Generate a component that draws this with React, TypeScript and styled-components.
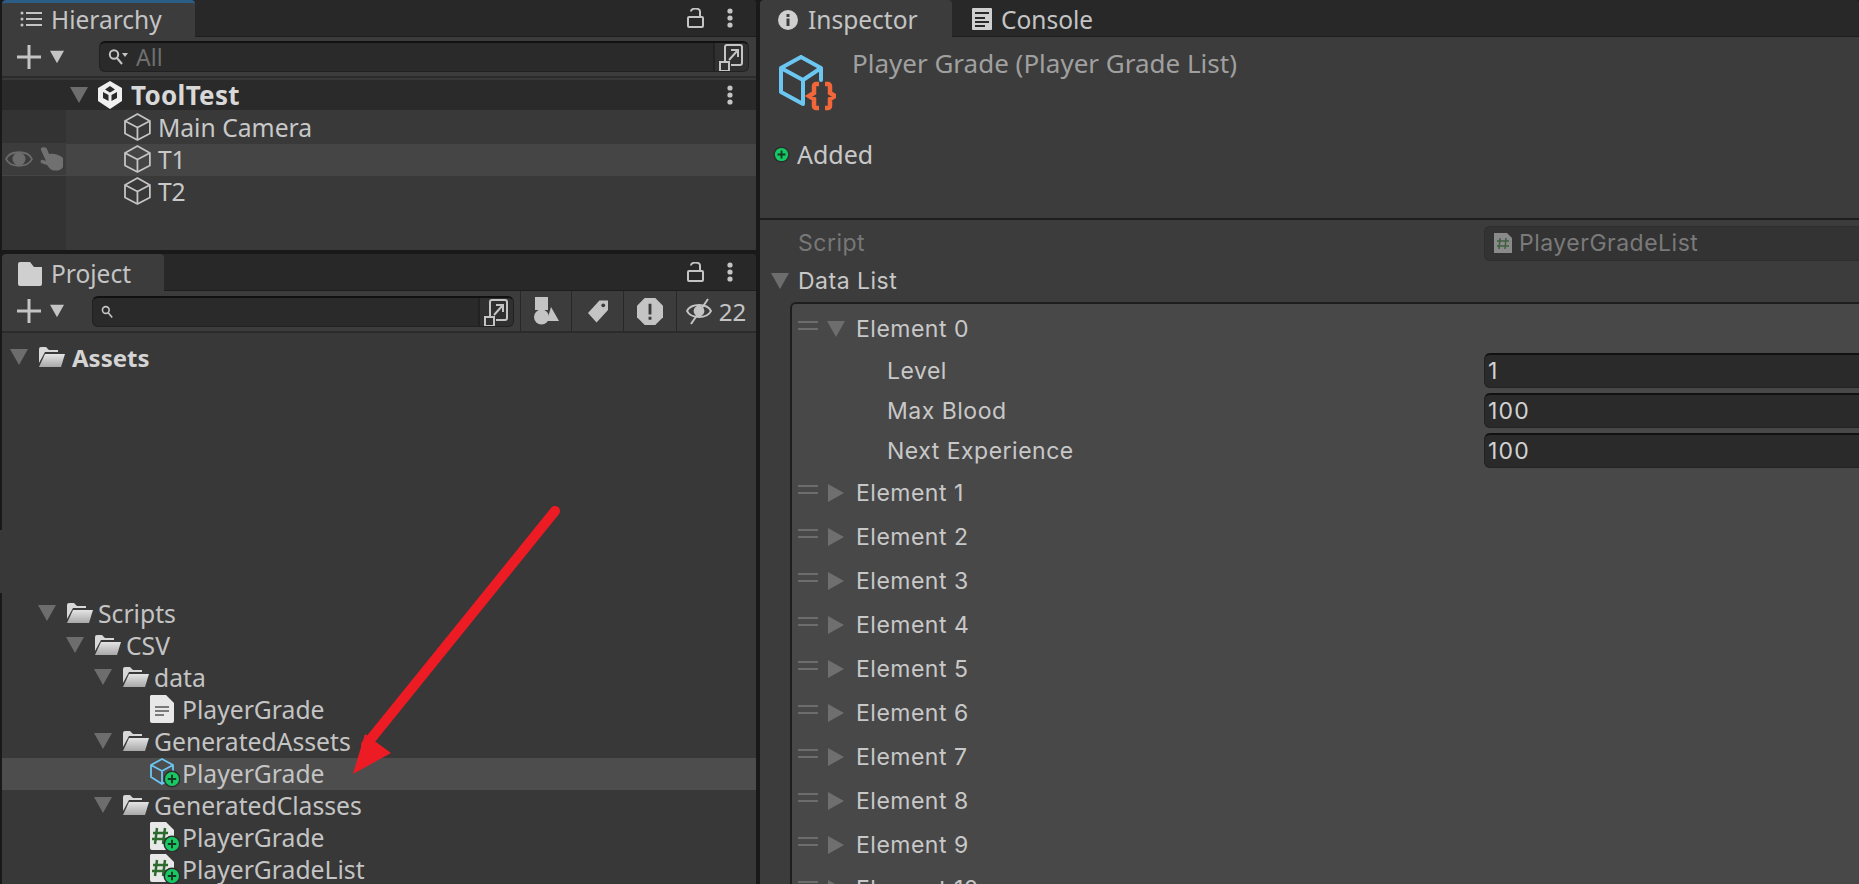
import React from 'react'
import styled, { createGlobalStyle } from 'styled-components'

const GlobalStyle = createGlobalStyle`
  html, body {
    margin: 0;
    background: #191919;
    overflow: hidden;
  }
  * { box-sizing: border-box; }
`

const Page = styled.div`
  position: relative;
  width: 1859px;
  height: 884px;
  overflow: hidden;
  display: grid;
  grid-template-columns: 754px 1fr;
  column-gap: 4px;
  padding-left: 2px;
  background: #191919;
  font-family: 'Noto Sans', sans-serif;
  color: #c8c8c8;
`

const Column = styled.div`
  display: flex;
  flex-direction: column;
  gap: 4px;
  min-height: 0;
`

const Panel = styled.section<{ $height?: number }>`
  display: flex;
  flex-direction: column;
  background: #383838;
  overflow: hidden;
  border-radius: 4px 4px 0 0;
  ${({ $height }) => ($height ? `height: ${$height}px; flex: none;` : 'flex: 1;')}
`

const TabBar = styled.div`
  height: 37px;
  flex: none;
  display: flex;
  align-items: stretch;
  background: #282828;
  border-bottom: 1px solid #1e1e1e;
`

const Tab = styled.div<{ $width: number; $active?: boolean; $accent?: boolean; $pad: number; $gap?: number }>`
  width: ${({ $width }) => $width}px;
  display: flex;
  align-items: center;
  gap: ${({ $gap }) => $gap ?? 9}px;
  padding-left: ${({ $pad }) => $pad}px;
  padding-top: ${({ $accent }) => ($accent ? 0 : 2)}px;
  padding-bottom: ${({ $accent }) => ($accent ? 2 : 0)}px;
  font-size: 24.5px;
  color: #c4c4c4;
  background: ${({ $active }) => ($active ? '#3c3c3c' : 'transparent')};
  border-top: ${({ $accent }) => ($accent ? '3px solid #2c5d87' : 'none')};
  border-radius: 4px 4px 0 0;
  margin-bottom: ${({ $active }) => ($active ? '-1px' : '0')};
  position: relative;
`

const TabActions = styled.div`
  margin-left: auto;
  display: flex;
  align-items: center;
  gap: 23px;
  padding-right: 23px;
`

const Toolbar = styled.div<{ $height: number }>`
  height: ${({ $height }) => $height}px;
  flex: none;
  display: flex;
  align-items: center;
  padding-left: 15px;
  background: #3c3c3c;
  border-bottom: 2px solid #2b2b2b;
`

const AddButton = styled.div`
  display: flex;
  align-items: center;
  gap: 9px;
`

const SearchField = styled.div<{ $left: number; $width: number }>`
  margin-left: ${({ $left }) => $left}px;
  width: ${({ $width }) => $width}px;
  height: 31px;
  flex: none;
  display: flex;
  align-items: center;
  background: #2a2a2a;
  border: 1px solid #212121;
  border-top: 2px solid #111;
  border-radius: 6px;
  padding-left: 8px;
  overflow: hidden;
`

const SearchHint = styled.span`
  margin-left: 8px;
  font-size: 23px;
  color: #6f6f6f;
`

const PopoutSlot = styled.div`
  margin-left: auto;
  width: 35px;
  height: 100%;
  flex: none;
  display: flex;
  align-items: center;
  justify-content: center;
  background: #303030;
  border-left: 2px solid #222;
`

const FilterGroup = styled.div`
  margin-left: 6px;
  height: 100%;
  display: flex;
`

const FilterButton = styled.div<{ $width: number }>`
  width: ${({ $width }) => $width}px;
  display: flex;
  align-items: center;
  justify-content: center;
  gap: 7px;
  border-left: 1px solid #282828;
  font-size: 24px;
  color: #c4c4c4;
`

const SceneRow = styled.div`
  height: 30px;
  margin-top: 2px;
  flex: none;
  display: flex;
  align-items: center;
  padding-left: 68px;
  background: #2a2a2a;
  font-size: 26px;
  font-weight: 700;
  letter-spacing: 0.3px;
  color: #d8d8d8;
`

const SceneArrow = styled.div`
  width: 28px;
  flex: none;
  display: flex;
`

const SceneName = styled.span`
  margin-left: 9px;
`

const SceneMenu = styled.div`
  margin-left: auto;
  padding-right: 23px;
  display: flex;
`

const HierarchyBody = styled.div`
  position: relative;
  flex: 1;
  background: linear-gradient(to right, #333 64px, #393939 64px);
`

const ObjectRow = styled.div<{ $height: number; $hot?: boolean; $lift?: boolean }>`
  height: ${({ $height }) => $height}px;
  display: flex;
  align-items: center;
  padding-bottom: ${({ $lift }) => ($lift ? 2 : 0)}px;
  background: ${({ $hot }) => ($hot ? '#454545' : 'transparent')};
  font-size: 24.7px;
  color: #c8c8c8;
`

const RowGutter = styled.div<{ $hot?: boolean }>`
  width: 64px;
  height: calc(100% + ${({ $hot }) => ($hot ? 2 : 0)}px);
  flex: none;
  display: flex;
  align-items: center;
  gap: 7px;
  padding-left: 3px;
  background: ${({ $hot }) => ($hot ? '#3c3c3c' : 'transparent')};
`

const ObjectIcon = styled.div<{ $left: number }>`
  margin-left: ${({ $left }) => $left}px;
  margin-right: 7px;
  display: flex;
`

const TreeBody = styled.div`
  flex: 1;
  padding-top: 9px;
`

const TreeGap = styled.div`
  height: 224px;
`

const TreeRow = styled.div<{ $depth: number; $selected?: boolean; $bold?: boolean }>`
  height: 32px;
  display: flex;
  align-items: center;
  padding-left: ${({ $depth }) => 8 + $depth * 28}px;
  padding-bottom: 2px;
  background: ${({ $selected }) => ($selected ? '#4d4d4d' : 'transparent')};
  font-size: ${({ $bold }) => ($bold ? 24 : 24.7)}px;
  font-weight: ${({ $bold }) => ($bold ? 700 : 400)};
  color: ${({ $bold }) => ($bold ? '#d4d4d4' : '#c4c4c4')};
`

const TreeArrow = styled.div`
  width: 28px;
  flex: none;
  display: flex;
`

const TreeIcon = styled.div<{ $width: number }>`
  width: ${({ $width }) => $width}px;
  flex: none;
  display: flex;
`

const InspectorPanel = styled(Panel)`
  background: #3c3c3c;
`

const InspectorHeader = styled.header`
  height: 183px;
  flex: none;
  display: flex;
  flex-direction: column;
  border-bottom: 2px solid #1e1e1e;
`

const TitleRow = styled.div`
  display: flex;
  align-items: flex-start;
  padding: 18px 0 0 18px;
`

const AssetTitle = styled.div`
  margin-left: 16px;
  margin-top: -10px;
  font-size: 26px;
  color: #a0a0a0;
`

const AddedRow = styled.div`
  margin-top: 26px;
  padding-left: 13px;
  display: flex;
  align-items: center;
  gap: 7px;
  font-size: 25px;
  color: #c8c8c8;
`

const ScriptRow = styled.div`
  margin-top: 4px;
  height: 38px;
  flex: none;
  display: flex;
  align-items: center;
  padding-left: 38px;
  font-family: Inter, sans-serif;
  font-size: 23px;
  letter-spacing: 0.5px;
  color: #777;
`

const ScriptLabel = styled.span`
  width: 686px;
  flex: none;
`

const ScriptField = styled.div`
  flex: 1;
  height: 35px;
  display: flex;
  align-items: center;
  gap: 7px;
  padding-left: 9px;
  background: #333;
  border: 1px solid #2e2e2e;
  border-right: none;
  border-radius: 6px 0 0 6px;
  color: #7a7a7a;
`

const DataListRow = styled.div`
  height: 38px;
  flex: none;
  display: flex;
  align-items: center;
  padding-left: 11px;
  gap: 9px;
  font-family: Inter, sans-serif;
  font-size: 23px;
  letter-spacing: 0.5px;
  color: #c8c8c8;
`

const ListBox = styled.div`
  margin: 2px 0 0 30px;
  flex: 1;
  padding-top: 3px;
  background: #484848;
  border-top: 2px solid #1e1e1e;
  border-left: 2px solid #1e1e1e;
  border-radius: 6px 0 0 0;
  font-family: Inter, sans-serif;
  font-size: 23px;
  letter-spacing: 0.5px;
  color: #c8c8c8;
`

const ElementRow = styled.div`
  height: 44px;
  display: flex;
  align-items: center;
  padding-left: 6px;
`

const DragHandle = styled.div`
  width: 20px;
  height: 9px;
  margin-top: -8px;
  margin-right: 9px;
  flex: none;
  border-top: 2px solid #6c6c6c;
  border-bottom: 2px solid #6c6c6c;
`

const ElementArrow = styled.div`
  width: 29px;
  flex: none;
  display: flex;
`

const FieldRow = styled.div`
  height: 40px;
  display: flex;
  align-items: center;
  padding-left: 95px;
`

const FieldLabel = styled.span`
  width: 597px;
  flex: none;
`

const FieldInput = styled.div`
  flex: 1;
  height: 35px;
  margin-bottom: 1px;
  display: flex;
  align-items: center;
  padding-left: 3px;
  background: #2a2a2a;
  border: 1px solid #222;
  border-top: 2px solid #111;
  border-right: none;
  border-radius: 6px 0 0 6px;
  letter-spacing: 1.2px;
  color: #d2d2d2;
`

const EdgePatch = styled.div`
  position: absolute;
  left: 0;
  top: 530px;
  width: 2px;
  height: 63px;
  background: #383838;
`

const ArrowOverlay = styled.svg`
  position: absolute;
  left: 0;
  top: 0;
  pointer-events: none;
`

const Down = ({ size = 18, color = '#6d6d6d' }: { size?: number; color?: string }) => (
  <svg width={size} height={size} viewBox="0 0 18 18">
    <path d="M0 1h18L9 17z" fill={color} />
  </svg>
)

const Right = () => (
  <svg width="18" height="18" viewBox="0 0 18 18">
    <path d="M1 0l16 9L1 18z" fill="#6f6f6f" />
  </svg>
)

const Lock = () => (
  <svg width="17" height="20" viewBox="0 0 17 20" fill="none" stroke="#c4c4c4" strokeWidth="2">
    <path d="M4 3.5a4.5 3 0 0 1 9 0V9" />
    <rect x="1" y="9" width="15" height="10" rx="1" />
  </svg>
)

const Kebab = () => (
  <svg width="6" height="20" viewBox="0 0 6 20" fill="#c4c4c4">
    <circle cx="3" cy="3" r="2.6" />
    <circle cx="3" cy="10" r="2.6" />
    <circle cx="3" cy="17" r="2.6" />
  </svg>
)

const Plus = () => (
  <svg width="24" height="24" viewBox="0 0 24 24">
    <path d="M10.5 0h3v10.5H24v3H13.5V24h-3V13.5H0v-3h10.5z" fill="#c4c4c4" />
  </svg>
)

const Magnifier = ({ caret }: { caret?: boolean }) => (
  <svg width={caret ? 20 : 16} height="18" viewBox="0 0 20 18" fill="none" stroke="#c4c4c4" strokeWidth="2">
    <circle cx="6" cy="6.5" r="4.2" />
    <path d="M9 10l5 6" />
    {caret && <path d="M14 5h6l-3 4z" fill="#c4c4c4" stroke="none" />}
  </svg>
)

const Popout = () => (
  <svg width="25" height="30" viewBox="0 0 25 30" fill="none" stroke="#c4c4c4" strokeWidth="2">
    <path d="M6 19V5a2 2 0 0 1 2-2h13a2 2 0 0 1 2 2v16a2 2 0 0 1-2 2H12" />
    <path d="M10 18l9-10M12 8h7v7" />
    <rect x="1" y="20" width="9" height="9" />
  </svg>
)

const Cube = ({ color = '#c4c4c4', size = 28, stroke = 1.8 }: { color?: string; size?: number; stroke?: number }) => (
  <svg width={size * 0.96} height={size} viewBox="0 0 27 28" fill="none" stroke={color} strokeWidth={stroke} strokeLinejoin="round">
    <path d="M13.5 1L26 8v12.5L13.5 27 1 20.5V8z" />
    <path d="M1 8l12.5 6.5L26 8M13.5 14.5V27" />
  </svg>
)

const UnityLogo = () => (
  <svg width="24" height="28" viewBox="0 0 24 28">
    <path
      fill="#efefef"
      fillRule="evenodd"
      d="M12 0l12 7v13l-12 8-12-8V7zM12 5L7 8.500l5 3 5-3zM5 11v6l5.500 3v-6zM19 11l-5.500 3v6l5.500-3z"
    />
  </svg>
)

const Eye = () => (
  <svg width="28" height="18" viewBox="0 0 28 18">
    <path d="M1 9c4-9 22-9 26 0-4 9-22 9-26 0z" fill="none" stroke="#6c6c6c" strokeWidth="1.8" />
    <circle cx="14" cy="9" r="6.5" fill="#6c6c6c" />
  </svg>
)

const Hand = () => (
  <svg width="23" height="24" viewBox="0 0 23 24">
    <path
      fill="#707070"
      d="M1 1c2-1.500 5-1 6 1l2 5c5-1 11 1 14 4v9c-2 3-5 4-9 3.500-4-.5-5-3.500-7-5.500l-6-2c-1-2 0-4 2-3l3 1L1 3z"
    />
  </svg>
)

const Folder = () => (
  <svg width="27" height="20" viewBox="0 0 27 20" fill="#c2c2c2">
    <defs>
      <linearGradient id="folderFront" x1="0" y1="0" x2="0" y2="1">
        <stop offset="0" stopColor="#e4e4e4" />
        <stop offset="1" stopColor="#a8a8a8" />
      </linearGradient>
    </defs>
    <path d="M1 18V2a2 2 0 0 1 2-2h5l3 3h9v2H7L1 16z" fill="#d8d8d8" />
    <path d="M7 7h20l-4 13H1z" fill="url(#folderFront)" />
  </svg>
)

const PageIcon = styled.svg`
  display: block;
`

const TextFile = () => (
  <PageIcon width="24" height="28" viewBox="0 0 24 28">
    <path d="M1 0h15l8 8v18a2 2 0 0 1-2 2H2a2 2 0 0 1-2-2V1z" fill="#e8e8e8" />
    <path d="M5 11h14v2H5zM5 15h14v2H5zM5 19h9v2H5z" fill="#7a7a7a" />
  </PageIcon>
)

const GreenBadge = ({ x, y, r = 7 }: { x: number; y: number; r?: number }) => (
  <g>
    <circle cx={x} cy={y} r={r + 1.5} fill="#2e2e2e" />
    <circle cx={x} cy={y} r={r} fill="#17c964" />
    <path d={`M${x - r * 0.6} ${y}h${r * 1.2}M${x} ${y - r * 0.6}v${r * 1.2}`} stroke="#143a22" strokeWidth="2" />
  </g>
)

const ScriptFile = () => (
  <PageIcon width="30" height="30" viewBox="0 0 30 30">
    <path d="M1 0h15l8 8v18a2 2 0 0 1-2 2H2a2 2 0 0 1-2-2V1z" fill="#e8e8e8" />
    <path d="M7 6l-2 16M15 6l-2 16M3 11h15M2 17h15" stroke="#2d6a2d" strokeWidth="2.5" fill="none" />
    <GreenBadge x={22} y={22} />
  </PageIcon>
)

const AddedCube = () => (
  <PageIcon width="30" height="30" viewBox="0 0 30 30" fill="none">
    <path
      d="M12 1l11 6v12L12 26 1 19V7zM1 7l11 6 11-6M12 13v13"
      stroke="#6cc6f2"
      strokeWidth="1.8"
      strokeLinejoin="round"
    />
    <GreenBadge x={22} y={21} />
  </PageIcon>
)

const ListIcon = () => (
  <svg width="22" height="18" viewBox="0 0 22 18" fill="#c4c4c4">
    <path d="M6 2h16v2H6zM6 8h16v2H6zM6 14h16v2H6z" />
    <circle cx="2" cy="3" r="1.5" />
    <circle cx="2" cy="9" r="1.5" />
    <circle cx="2" cy="15" r="1.5" />
  </svg>
)

const ProjectFolder = () => (
  <svg width="24" height="24" viewBox="0 0 24 24">
    <path d="M0 2a2 2 0 0 1 2-2h10l4 5h8v17a2 2 0 0 1-2 2H2a2 2 0 0 1-2-2z" fill="#cfcfcf" />
  </svg>
)

const Shapes = () => (
  <svg width="25" height="28" viewBox="0 0 25 28" fill="#c4c4c4">
    <rect x="1" y="0" width="13" height="13" />
    <path d="M17 10l8 14H13z" />
    <circle cx="7.5" cy="20" r="7.5" />
  </svg>
)

const Tag = () => (
  <svg width="20" height="24" viewBox="0 0 21 24">
    <path d="M12 1h9v10L9 24 0 14z" fill="#c4c4c4" />
    <circle cx="16" cy="6" r="2" fill="#3c3c3c" />
  </svg>
)

const Alert = () => (
  <svg width="26" height="27" viewBox="0 0 27 28">
    <path d="M8 0h11l8 8v12l-8 8H8l-8-8V8z" fill="#c4c4c4" />
    <path d="M12 6h3v11h-3zM12 19.5h3v3h-3z" fill="#3c3c3c" />
  </svg>
)

const EyeSlash = () => (
  <svg width="26" height="28" viewBox="0 0 26 28" fill="none" stroke="#c4c4c4" strokeWidth="1.8">
    <path d="M1 14c4-8 20-8 24 0-4 8-20 8-24 0z" />
    <circle cx="13" cy="14" r="4.5" fill="#c4c4c4" />
    <path d="M22 2L5 27" strokeWidth="2" />
  </svg>
)

const InfoIcon = () => (
  <svg width="20" height="20" viewBox="0 0 20 20">
    <circle cx="10" cy="10" r="10" fill="#cfcfcf" />
    <path d="M8.5 8.5h3V16h-3zM8.5 4h3v3h-3z" fill="#3c3c3c" />
  </svg>
)

const ConsoleIcon = () => (
  <svg width="20" height="22" viewBox="0 0 20 22">
    <rect width="20" height="22" rx="1" fill="#cfcfcf" />
    <path d="M3 4h14v2H3zM3 9h10v2H3zM3 13h14v2H3zM3 17h10v2H3z" fill="#282828" />
  </svg>
)

const AssetIcon = () => (
  <svg width="58" height="56" viewBox="0 0 58 56" fill="none">
    <path
      d="M23 2l20 11v12M25 49L3 37V13L23 2M3 13l22 12 18-12M25 25v24"
      stroke="#6cc6f2"
      strokeWidth="4"
      strokeLinejoin="round"
      strokeLinecap="round"
    />
    <path
      d="M41 29h-3a2 2 0 0 0-2 2v7l-5 3 5 3v7a2 2 0 0 0 2 2h3M47 29h3a2 2 0 0 1 2 2v7l5 3-5 3v7a2 2 0 0 1-2 2h-3"
      stroke="#f2673a"
      strokeWidth="4.5"
    />
  </svg>
)

const SmallBadge = () => (
  <svg width="17" height="17" viewBox="0 0 18 18">
    <GreenBadge x={9} y={9} r={7} />
  </svg>
)

const ScriptGlyph = () => (
  <svg width="18" height="20" viewBox="0 0 18 20">
    <path d="M0 0h13l5 5v15H0z" fill="#8a8a8a" />
    <path d="M6 5l-1 11M12 5l-1 11M3 8h12M3 13h12" stroke="#3f5f3f" strokeWidth="1.5" />
  </svg>
)

type TreeItem = {
  depth: number
  name: string
  kind: 'folder' | 'text' | 'asset' | 'script'
  selected?: boolean
}

const treeItems: TreeItem[] = [
  { depth: 1, name: 'Scripts', kind: 'folder' },
  { depth: 2, name: 'CSV', kind: 'folder' },
  { depth: 3, name: 'data', kind: 'folder' },
  { depth: 4, name: 'PlayerGrade', kind: 'text' },
  { depth: 3, name: 'GeneratedAssets', kind: 'folder' },
  { depth: 4, name: 'PlayerGrade', kind: 'asset', selected: true },
  { depth: 3, name: 'GeneratedClasses', kind: 'folder' },
  { depth: 4, name: 'PlayerGrade', kind: 'script' },
  { depth: 4, name: 'PlayerGradeList', kind: 'script' },
]

const treeIcons = {
  folder: <Folder />,
  text: <TextFile />,
  asset: <AddedCube />,
  script: <ScriptFile />,
}

const fields = [
  { label: 'Level', value: '1' },
  { label: 'Max Blood', value: '100' },
  { label: 'Next Experience', value: '100' },
]

const collapsed = [1, 2, 3, 4, 5, 6, 7, 8, 9, 10]

const App: React.FC = () => (
  <Page>
    <GlobalStyle />
    <Column>
      <Panel $height={250}>
        <TabBar>
          <Tab $width={193} $active $accent $pad={18}>
            <ListIcon />
            Hierarchy
          </Tab>
          <TabActions>
            <Lock />
            <Kebab />
          </TabActions>
        </TabBar>
        <Toolbar $height={41}>
          <AddButton>
            <Plus />
            <Down size={14} color="#c4c4c4" />
          </AddButton>
          <SearchField $left={35} $width={650}>
            <Magnifier caret />
            <SearchHint>All</SearchHint>
            <PopoutSlot>
              <Popout />
            </PopoutSlot>
          </SearchField>
        </Toolbar>
        <SceneRow>
          <SceneArrow>
            <Down />
          </SceneArrow>
          <UnityLogo />
          <SceneName>ToolTest</SceneName>
          <SceneMenu>
            <Kebab />
          </SceneMenu>
        </SceneRow>
        <HierarchyBody>
          <ObjectRow $height={34}>
            <RowGutter />
            <ObjectIcon $left={58}>
              <Cube />
            </ObjectIcon>
            Main Camera
          </ObjectRow>
          <ObjectRow $height={32} $hot $lift>
            <RowGutter $hot>
              <Eye />
              <Hand />
            </RowGutter>
            <ObjectIcon $left={58}>
              <Cube />
            </ObjectIcon>
            T1
          </ObjectRow>
          <ObjectRow $height={32} $lift>
            <ObjectIcon $left={122}>
              <Cube />
            </ObjectIcon>
            T2
          </ObjectRow>
        </HierarchyBody>
      </Panel>
      <Panel>
        <TabBar>
          <Tab $width={162} $active $pad={16}>
            <ProjectFolder />
            Project
          </Tab>
          <TabActions>
            <Lock />
            <Kebab />
          </TabActions>
        </TabBar>
        <Toolbar $height={42}>
          <AddButton>
            <Plus />
            <Down size={14} color="#c4c4c4" />
          </AddButton>
          <SearchField $left={28} $width={422}>
            <Magnifier />
            <PopoutSlot>
              <Popout />
            </PopoutSlot>
          </SearchField>
          <FilterGroup>
            <FilterButton $width={51}>
              <Shapes />
            </FilterButton>
            <FilterButton $width={52}>
              <Tag />
            </FilterButton>
            <FilterButton $width={53}>
              <Alert />
            </FilterButton>
            <FilterButton $width={79}>
              <EyeSlash />
              22
            </FilterButton>
          </FilterGroup>
        </Toolbar>
        <TreeBody>
          <TreeRow $depth={0} $bold>
            <TreeArrow>
              <Down />
            </TreeArrow>
            <TreeIcon $width={34}>
              <Folder />
            </TreeIcon>
            Assets
          </TreeRow>
          <TreeGap />
          {treeItems.map((item, i) => (
            <TreeRow key={i} $depth={item.depth} $selected={item.selected}>
              <TreeArrow>{item.kind === 'folder' && <Down />}</TreeArrow>
              <TreeIcon $width={32}>{treeIcons[item.kind]}</TreeIcon>
              {item.name}
            </TreeRow>
          ))}
        </TreeBody>
      </Panel>
    </Column>
    <InspectorPanel>
      <TabBar>
        <Tab $width={192} $active $pad={18} $gap={10}>
          <InfoIcon />
          Inspector
        </Tab>
        <Tab $width={200} $pad={20}>
          <ConsoleIcon />
          Console
        </Tab>
      </TabBar>
      <InspectorHeader>
        <TitleRow>
          <AssetIcon />
          <AssetTitle>Player Grade (Player Grade List)</AssetTitle>
        </TitleRow>
        <AddedRow>
          <SmallBadge />
          Added
        </AddedRow>
      </InspectorHeader>
      <ScriptRow>
        <ScriptLabel>Script</ScriptLabel>
        <ScriptField>
          <ScriptGlyph />
          PlayerGradeList
        </ScriptField>
      </ScriptRow>
      <DataListRow>
        <Down />
        Data List
      </DataListRow>
      <ListBox>
        <ElementRow>
          <DragHandle />
          <ElementArrow>
            <Down />
          </ElementArrow>
          Element 0
        </ElementRow>
        {fields.map(field => (
          <FieldRow key={field.label}>
            <FieldLabel>{field.label}</FieldLabel>
            <FieldInput>{field.value}</FieldInput>
          </FieldRow>
        ))}
        {collapsed.map(n => (
          <ElementRow key={n}>
            <DragHandle />
            <ElementArrow>
              <Right />
            </ElementArrow>
            Element {n}
          </ElementRow>
        ))}
      </ListBox>
    </InspectorPanel>
    <EdgePatch />
    <ArrowOverlay width="1859" height="884" viewBox="0 0 1859 884">
      <path d="M555 511L366 745" stroke="#ed1c24" strokeWidth="10" strokeLinecap="round" />
      <path d="M353 774l12-40 26 19z" fill="#ed1c24" />
    </ArrowOverlay>
  </Page>
)

export default App
